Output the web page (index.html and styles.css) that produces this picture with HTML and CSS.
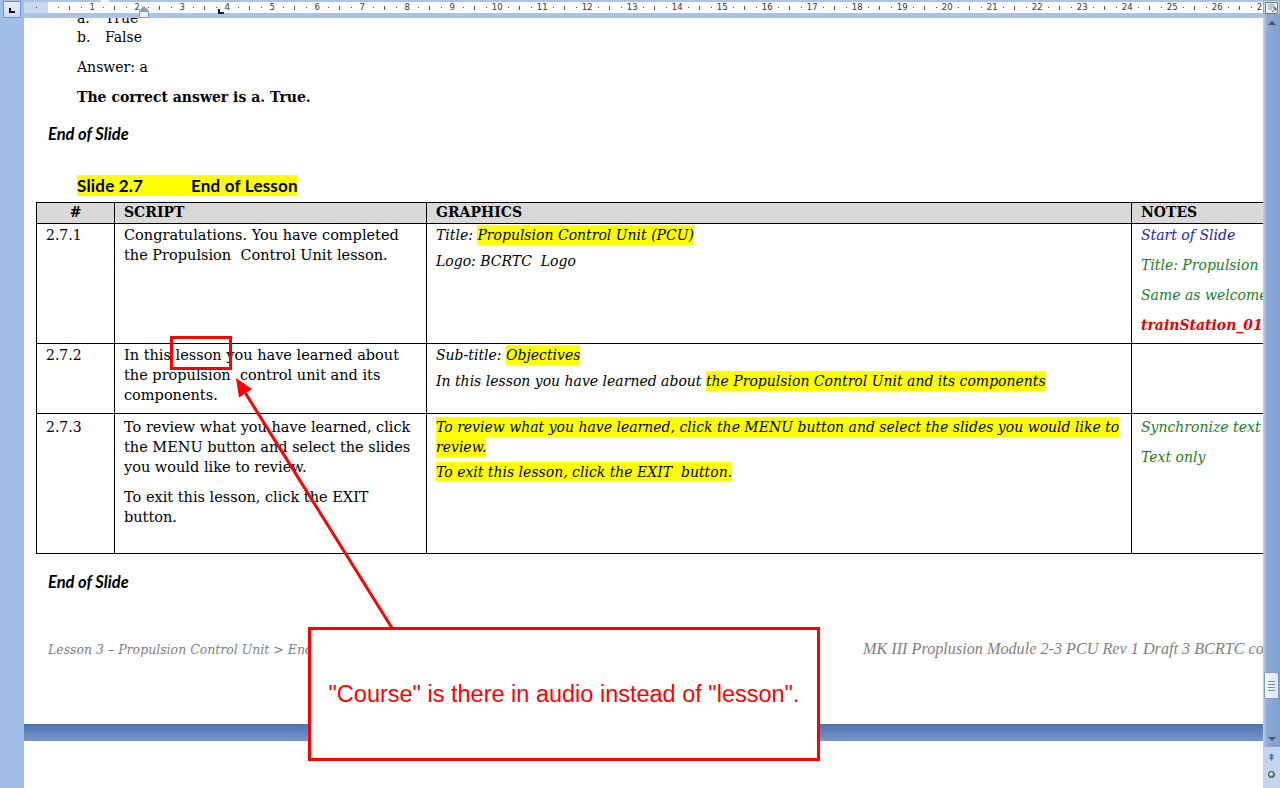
FILE: index.html
```html
<!DOCTYPE html>
<html lang="en">
<head>
<meta charset="utf-8">
<title>Script review</title>
<link rel="stylesheet" href="styles.css">
</head>
<body>
<div class="app">
  <div class="leftcol">
    <div class="corner"><div class="corner-btn"><span class="tabL"></span></div></div>
  </div>
  <div class="center">
    <div class="hruler">
      <div class="rband">
        <div class="rbg"><div class="rmargin"></div><div class="rwhite"></div></div>
        <div class="rticks">
          <i class="d"></i><i></i>
          <i class="d"></i><i class="l"></i><i class="d"></i><b>1</b>
          <i class="d"></i><i class="l"></i><i class="d"></i><b>2</b>
          <i class="d"></i><i class="l"></i><i class="d"></i><b>3</b>
          <i class="d"></i><i class="l"></i><i class="d"></i><b>4</b>
          <i class="d"></i><i class="l"></i><i class="d"></i><b>5</b>
          <i class="d"></i><i class="l"></i><i class="d"></i><b>6</b>
          <i class="d"></i><i class="l"></i><i class="d"></i><b>7</b>
          <i class="d"></i><i class="l"></i><i class="d"></i><b>8</b>
          <i class="d"></i><i class="l"></i><i class="d"></i><b>9</b>
          <i class="d"></i><i class="l"></i><i class="d"></i><b>10</b>
          <i class="d"></i><i class="l"></i><i class="d"></i><b>11</b>
          <i class="d"></i><i class="l"></i><i class="d"></i><b>12</b>
          <i class="d"></i><i class="l"></i><i class="d"></i><b>13</b>
          <i class="d"></i><i class="l"></i><i class="d"></i><b>14</b>
          <i class="d"></i><i class="l"></i><i class="d"></i><b>15</b>
          <i class="d"></i><i class="l"></i><i class="d"></i><b>16</b>
          <i class="d"></i><i class="l"></i><i class="d"></i><b>17</b>
          <i class="d"></i><i class="l"></i><i class="d"></i><b>18</b>
          <i class="d"></i><i class="l"></i><i class="d"></i><b>19</b>
          <i class="d"></i><i class="l"></i><i class="d"></i><b>20</b>
          <i class="d"></i><i class="l"></i><i class="d"></i><b>21</b>
          <i class="d"></i><i class="l"></i><i class="d"></i><b>22</b>
          <i class="d"></i><i class="l"></i><i class="d"></i><b>23</b>
          <i class="d"></i><i class="l"></i><i class="d"></i><b>24</b>
          <i class="d"></i><i class="l"></i><i class="d"></i><b>25</b>
          <i class="d"></i><i class="l"></i><i class="d"></i><b>26</b>
          <i class="d"></i><i class="l"></i><i class="d"></i><b>27</b>
        </div>
      </div>
      <div class="rstrip"></div>
    </div>
    <div class="viewport">
      <div class="page">
        <div class="doc">
          <div class="qlist">
            <div class="qitem"><span class="qnum">a.</span>True</div>
            <div class="qitem"><span class="qnum">b.</span>False</div>
          </div>
          <p class="para ans">Answer: a</p>
          <p class="para correct">The correct answer is a. True.</p>
          <p class="eos eos-top">End of Slide</p>
          <div class="slide-heading"><span class="hl-head"><span class="h-num">Slide 2.7</span>End of Lesson</span></div>
          <table class="st">
            <colgroup><col class="c1"><col class="c2"><col class="c3"><col class="c4"></colgroup>
            <thead>
              <tr class="hdr"><th class="num">#</th><th>SCRIPT</th><th>GRAPHICS</th><th>NOTES</th></tr>
            </thead>
            <tbody>
              <tr class="r1">
                <td>2.7.1</td>
                <td><p class="s">Congratulations. You have completed<br>the Propulsion&nbsp; Control Unit lesson.</p></td>
                <td>
                  <p class="g">Title: <span class="hl">Propulsion Control Unit (PCU)</span></p>
                  <p class="g">Logo: BCRTC&nbsp; Logo</p>
                </td>
                <td>
                  <p class="n blue">Start of Slide</p>
                  <p class="n green">Title: Propulsion Control Unit (PCU)</p>
                  <p class="n green">Same as welcome slide</p>
                  <p class="n red">trainStation_01.mp3</p>
                </td>
              </tr>
              <tr class="r2">
                <td>2.7.2</td>
                <td><p class="s">In this lesson you have learned about<br>the propulsion&nbsp; control unit and its<br>components.</p></td>
                <td>
                  <p class="g">Sub-title: <span class="hl">Objectives</span></p>
                  <p class="g">In this lesson you have learned about <span class="hl">the Propulsion Control Unit and its components</span></p>
                </td>
                <td></td>
              </tr>
              <tr class="r3">
                <td>2.7.3</td>
                <td>
                  <p class="s">To review what you have learned, click<br>the MENU button and select the slides<br>you would like to review.</p>
                  <p class="s">To exit this lesson, click the EXIT<br>button.</p>
                </td>
                <td>
                  <p class="g g-tight"><span class="hl">To review what you have learned, click the MENU button and select the slides you would like to<br>review.</span></p>
                  <p class="g"><span class="hl">To exit this lesson, click the EXIT&nbsp; button.</span></p>
                </td>
                <td>
                  <p class="n green">Synchronize text with audio</p>
                  <p class="n green">Text only</p>
                </td>
              </tr>
            </tbody>
          </table>
          <p class="eos eos-bottom">End of Slide</p>
          <div class="footer">
            <span class="foot-left">Lesson 3 – Propulsion Control Unit &gt; End of Lesson</span>
            <span class="foot-right">MK III Proplusion Module 2-3 PCU Rev 1 Draft 3 BCRTC confidential</span>
          </div>
        </div>
      </div>
      <div class="pagegap"></div>
      <div class="page2"></div>
    </div>
  </div>
  <div class="vscroll">
    <div class="vs-view">
      <svg width="13" height="12" viewBox="0 0 13 12"><rect x="0.5" y="0.5" width="12" height="11" fill="#eef2f8" stroke="#6b7a90"/><path d="M3 3h7M3 5h7M3 7h4" stroke="#8a96a8"/><path d="M7 10l4-4M11 6v3M11 6h-3" stroke="#4a5a70" fill="none"/></svg>
    </div>
    <div class="vs-btn"><span class="arr-up"></span></div>
    <div class="vs-track"><div class="vs-thumb"><span></span><span></span><span></span><span></span></div></div>
    <div class="vs-btn"><span class="arr-down"></span></div>
    <div class="vs-nav">
      <div class="nav-btn"><span class="dbl">&#x21DE;</span></div>
      <div class="nav-btn"><span class="dot"></span></div>
    </div>
  </div>
</div>

<div class="mk mk-first"></div>
<div class="mk mk-hang"><span class="hang-tri"></span><span class="hang-box"></span></div>
<div class="mk mk-tab"></div>

<div class="annot-mark"></div>
<svg class="annot-arrow" width="1280" height="788" viewBox="0 0 1280 788">
  <line x1="392" y1="628" x2="245.5" y2="393.3" stroke="#ff0000" stroke-width="3"/>
  <polygon points="236,378 252,389 239,397.5" fill="#ff0000"/>
</svg>
<div class="annot-box"><span>"Course" is there in audio instead of "lesson".</span></div>
</body>
</html>
```
FILE: styles.css
```css
* { box-sizing: border-box; }
html, body { margin: 0; padding: 0; }
body {
  width: 1280px;
  height: 788px;
  overflow: hidden;
  position: relative;
  background: #a0bee7;
  font-family: "DejaVu Serif", serif;
  color: #000;
}
.app { display: flex; height: 788px; }

/* left column */
.leftcol { width: 24px; flex: none; background: #a0bee7; }
.corner { height: 19px; display: flex; align-items: flex-start; justify-content: center; padding-top: 1px; }
.corner-btn {
  width: 18px; height: 17px;
  border: 1px solid #6f92c6;
  background: linear-gradient(#e8f0fb, #c9daf1);
  display: flex; align-items: center; justify-content: center;
}
.tabL { width: 6px; height: 5px; border-left: 2px solid #111; border-bottom: 2px solid #111; margin-top: 2px; }

/* center */
.center { flex: 1; min-width: 0; display: flex; flex-direction: column; }
.hruler { height: 18px; flex: none; background: #a9c4e8; padding-top: 2px; }
.rband { height: 11px; display: grid; }
.rbg, .rticks { grid-area: 1 / 1; }
.rbg { display: flex; }
.rmargin { width: 24px; background: #c8d9f0; }
.rwhite { flex: 1; background: #fff; }
.rticks { display: flex; padding-left: 6.4px; font-family: "DejaVu Sans", sans-serif; font-size: 8.5px; color: #333; line-height: 11px; }
.rticks i, .rticks b {
  flex: none; width: 11.25px; display: flex; align-items: center; justify-content: center;
  font-style: normal; font-weight: normal; white-space: nowrap;
}
.rticks i.d::before { content: ""; width: 1px; height: 1px; background: #444; }
.rticks i.l::before { content: ""; width: 1px; height: 4px; background: #555; }
.rstrip { height: 5px; }

.viewport { flex: 1; overflow: hidden; display: flex; flex-direction: column; }
.page { height: 706px; flex: none; background: #fff; overflow: hidden; }
.pagegap { height: 17px; flex: none; background: linear-gradient(#4f72ab, #5f82ba 40%, #7596cb); }
.page2 { flex: 1; background: #fff; }

.doc { width: 1500px; padding-left: 12px; font-size: 14px; line-height: 20px; }

.qlist { margin-top: -9px; padding-left: 41px; }
.qitem { line-height: 19px; height: 19px; }
.qnum { display: inline-block; width: 28px; }
.para { margin: 0; padding-left: 41px; }
.ans { margin-top: 10px; }
.correct { margin-top: 10px; font-weight: bold; }

.eos {
  margin: 0; padding-left: 12px;
  font-family: Lato, "Liberation Sans", sans-serif; font-weight: bold; font-style: italic; font-size: 16.5px;
}
.eos-top { margin-top: 17px; }
.eos-bottom { margin-top: 18px; }

.slide-heading { margin-top: 31px; padding-left: 41px; line-height: 21px; height: 21px; }
.hl-head {
  display: inline-block; background: #ffff00;
  font-family: Lato, "Liberation Sans", sans-serif; font-weight: bold; font-size: 17px; letter-spacing: 0.2px; line-height: 21px;
}
.h-num { display: inline-block; width: 114px; }

.st {
  margin-top: 6px;
  border-collapse: collapse; table-layout: fixed; width: 1395px;
}
.c1 { width: 78px; }
.c2 { width: 312px; }
.c3 { width: 705px; }
.c4 { width: 300px; }
.st th, .st td {
  border: 1px solid #000; vertical-align: top; text-align: left;
  padding: 0 9px; white-space: nowrap; overflow: hidden;
}
.st td { padding-top: 1px; }
.st .r3 td { padding-top: 3px; }
.st th { background: #d9d9d9; font-weight: bold; height: 21px; line-height: 19px; }
.st th.num { text-align: center; }
.r1 td { height: 120px; }
.r2 td { height: 70px; }
.r3 td { height: 140px; }

.s { margin: 0 0 10px; font-size: 14.5px; }
.g { margin: 0 0 6px; font-style: italic; }
.g-tight { margin-bottom: 5px; }
.n { margin: 0 0 10px; font-style: italic; }
.s:last-child, .g:last-child, .n:last-child { margin-bottom: 0; }
.blue { color: #1a1ac4; }
.green { color: #1d7d1d; }
.red { color: #e60000; font-weight: bold; }
.hl { background: #ffff00; padding: 2px 0; }

.footer {
  margin-top: 47px; padding-left: 12px;
  display: grid; grid-template-columns: 815px auto; align-items: baseline;
  color: #7f7f7f; font-style: italic;
}
.foot-left { font-size: 12.5px; white-space: nowrap; }
.foot-right { font-family: "Liberation Serif", serif; font-size: 16.2px; white-space: nowrap; }

/* scrollbar */
.vscroll {
  width: 17px; flex: none; display: flex; flex-direction: column;
  background: linear-gradient(to right, #bcd0eb, #8eabd6 25%, #819fcd);
}
.vs-view { height: 15px; display: flex; align-items: center; justify-content: center; background: #d4dce8; border: 1px solid #9aabc4; }
.vs-btn { height: 16px; display: flex; align-items: center; justify-content: center; }
.arr-up { width: 0; height: 0; border-left: 4px solid transparent; border-right: 4px solid transparent; border-bottom: 4px solid #3f5478; }
.arr-down { width: 0; height: 0; border-left: 4px solid transparent; border-right: 4px solid transparent; border-top: 4px solid #3f5478; }
.vs-track { flex: 1; display: flex; flex-direction: column; padding-top: 641px; align-items: center; }
.vs-thumb {
  width: 15px; height: 27px; border: 1px solid #8099c0; border-radius: 2px;
  background: linear-gradient(to right, #f4f7fc, #dfe7f3);
  display: flex; flex-direction: column; align-items: center; justify-content: center; gap: 2px;
}
.vs-thumb span { width: 7px; height: 1px; background: #7a8aa6; }
.vs-nav { height: 41px; flex: none; background: #c3d6ef; display: flex; flex-direction: column; padding-top: 3px; }
.nav-btn { height: 16px; display: flex; align-items: center; justify-content: center; }
.dbl { font-family: "DejaVu Sans", sans-serif; font-size: 10px; color: #2a5fc8; line-height: 10px; }
.dot { width: 7px; height: 7px; border-radius: 50%; background: radial-gradient(circle at 35% 35%, #fff, #888 70%); border: 1px solid #333; }

/* ruler markers (overlay) */
.mk { position: absolute; }
.mk-first { left: 100px; top: 0; width: 0; height: 0; border-left: 5px solid transparent; border-right: 5px solid transparent; border-top: 6px solid #f3f6fb; }
.mk-hang { left: 139px; top: 6px; width: 10px; display: flex; flex-direction: column; }
.hang-tri { width: 0; height: 0; border-left: 5px solid transparent; border-right: 5px solid transparent; border-bottom: 5px solid #8b9cb6; }
.hang-box { width: 10px; height: 7px; background: #eef2f8; border: 1px solid #8b9cb6; }
.mk-tab { left: 218px; top: 9px; width: 6px; height: 5px; border-left: 2px solid #222; border-bottom: 2px solid #222; }

/* annotation overlays */
.annot-mark { position: absolute; left: 170px; top: 336px; width: 62px; height: 34px; border: 3px solid #ff0000; }
.annot-arrow { position: absolute; left: 0; top: 0; pointer-events: none; }
.annot-box {
  position: absolute; left: 308px; top: 627px; width: 512px; height: 134px;
  border: 3px solid #ff0000; background: #fff;
  display: flex; align-items: center; justify-content: center;
  font-family: "Liberation Sans", Arial, sans-serif; font-size: 23.5px; color: #ff0000;
}
```
